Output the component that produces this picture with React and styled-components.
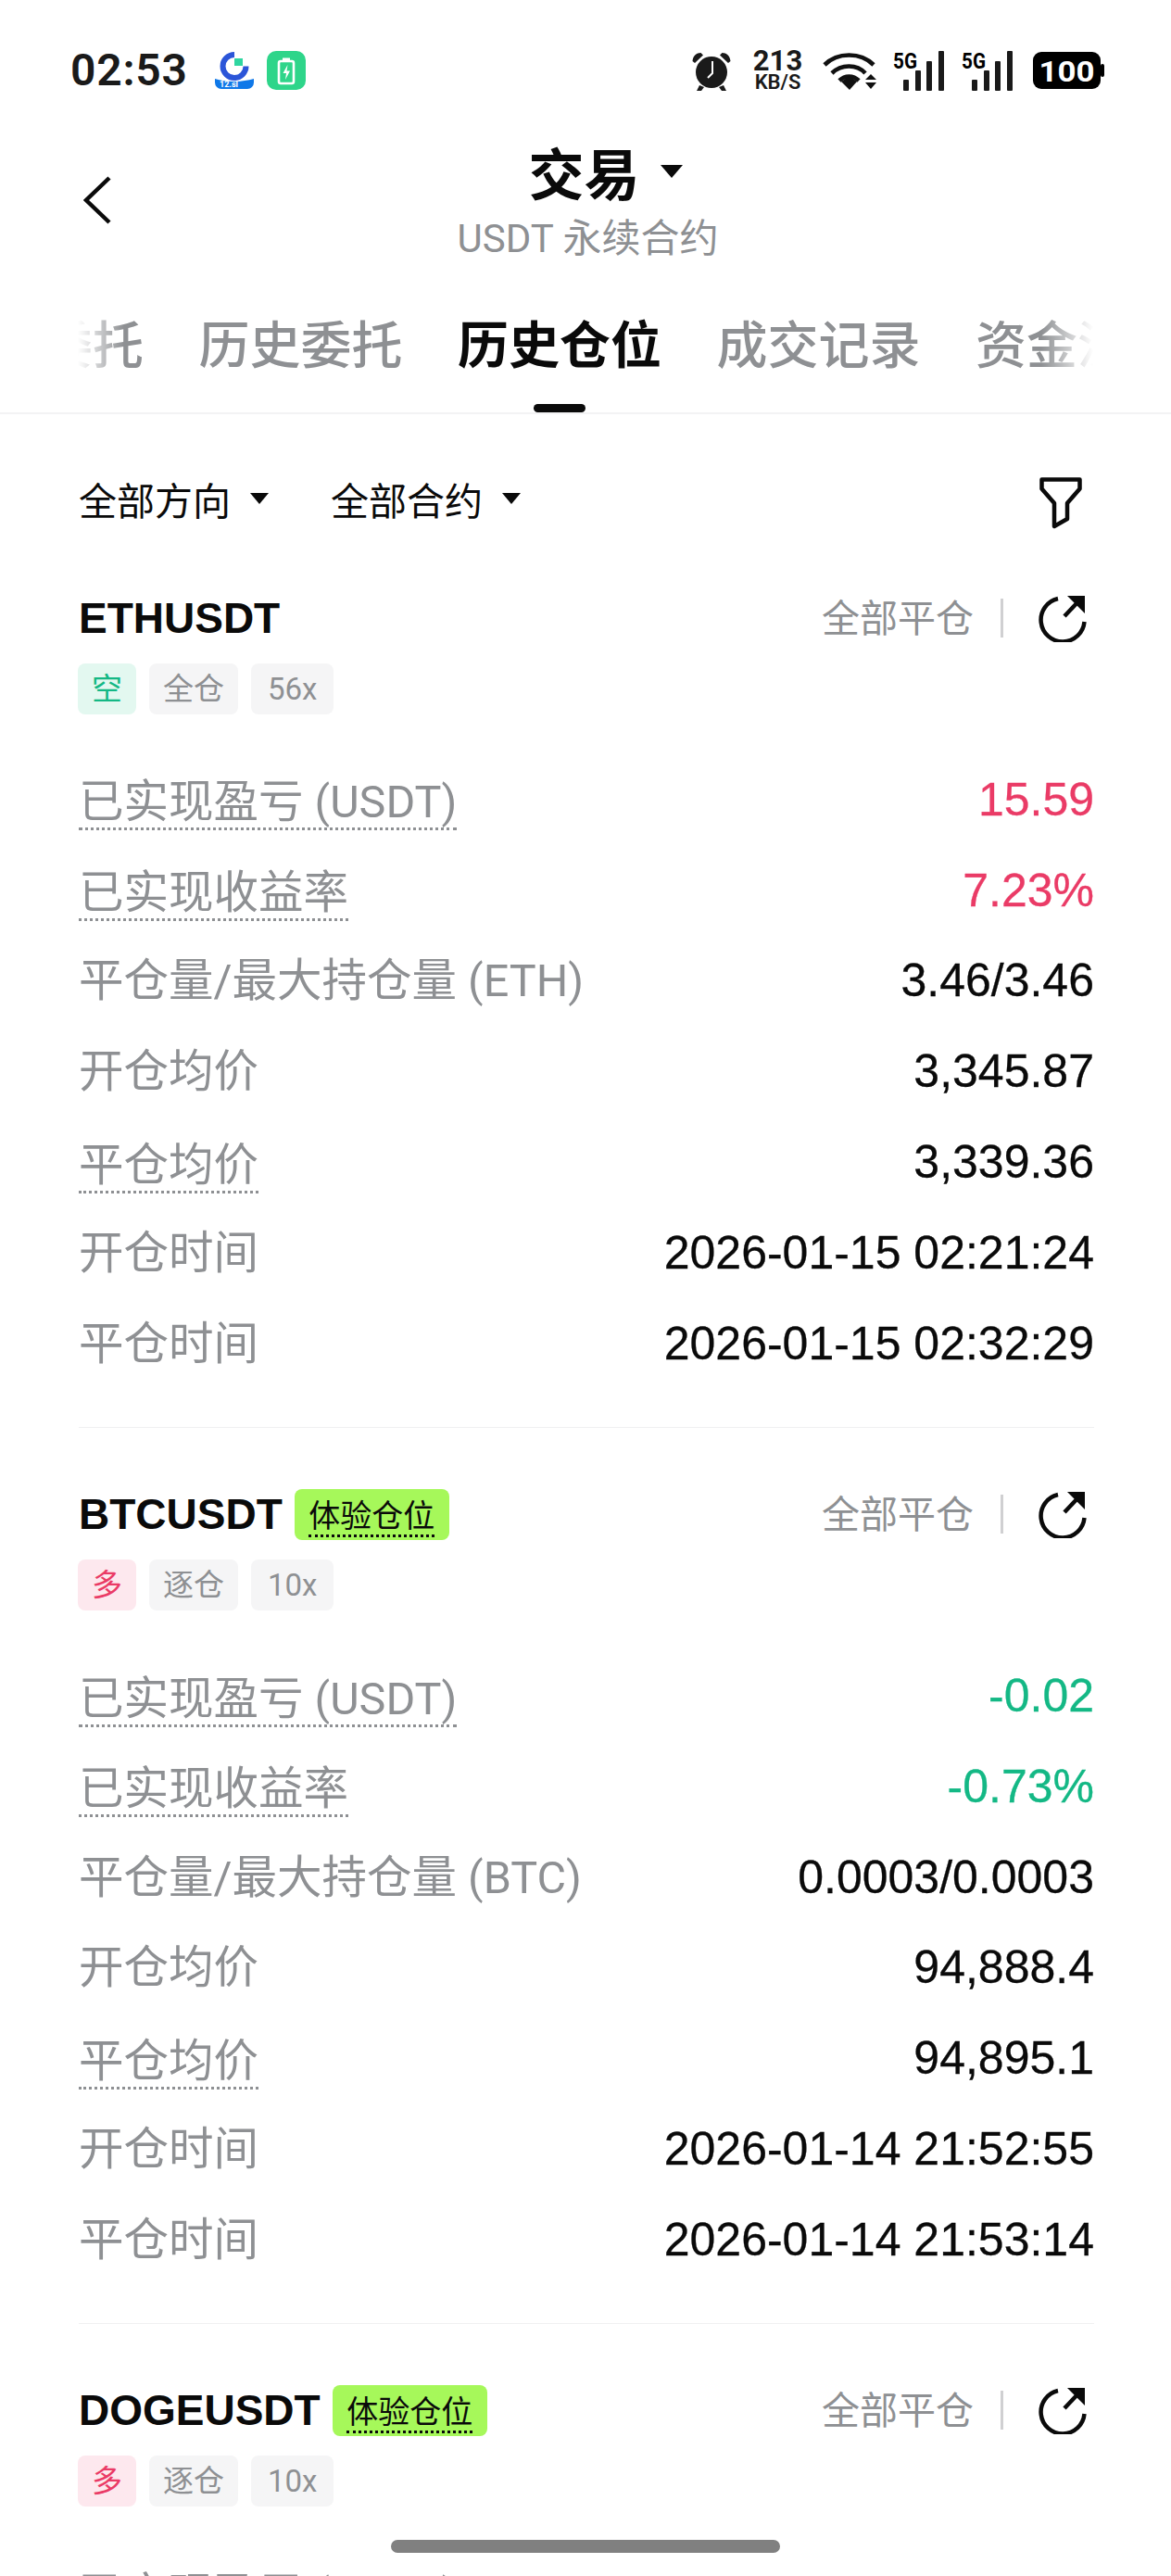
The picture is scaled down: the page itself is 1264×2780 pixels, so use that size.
import React from 'react';
import styled, { createGlobalStyle } from 'styled-components';

const CJK = `'Noto Sans CJK SC', sans-serif`;
const SANS = `Roboto, 'Noto Sans CJK SC', sans-serif`;
const GREY = '#8e9093';
const INK = '#0a0a0a';
const RED = '#ea3b66';
const GREEN = '#14b885';

const GlobalStyle = createGlobalStyle`
  html, body { margin: 0; padding: 0; background: #ffffff; }
`;

const Page = styled.div`
  position: relative;
  width: 1264px;
  height: 2780px;
  overflow: hidden;
  background: #ffffff;
  font-family: ${SANS};
  color: ${INK};
`;

const StatusBar = styled.div`
  display: flex;
  align-items: center;
  height: 44px;
  padding: 54px 72px 0 76px;
`;

const Clock = styled.span`
  font-size: 48px;
  font-weight: 600;
  letter-spacing: 0.8px;
  line-height: 44px;
  color: #1a1a1a;
  margin-right: 29px;
`;

const StatusIcons = styled.div`
  display: flex;
  align-items: center;
  gap: 14px;
`;

const StatusRight = styled.div`
  display: flex;
  align-items: center;
  margin-left: auto;
  gap: 19px;
`;

const Speed = styled.div`
  display: flex;
  flex-direction: column;
  align-items: center;
  width: 51px;
  margin: 0 4px 0 5px;
  font-weight: 700;
  color: #1a1a1a;
  line-height: 1;
`;

const SpeedValue = styled.span`
  font-size: 31px;
  line-height: 26px;
`;

const SpeedUnit = styled.span`
  font-size: 22px;
  line-height: 20px;
  font-weight: 600;
  white-space: nowrap;
`;

const BatterySlot = styled.div`
  display: flex;
  margin-left: 3px;
`;

const WifiSvg = styled.svg`
  margin-right: -2px;
`;

const Nav = styled.div`
  display: grid;
  grid-template-columns: 1fr auto 1fr;
  padding: 50px 85px 0 90px;
  height: 138px;
`;

const BackButton = styled.div`
  padding-top: 42px;
`;

const TitleBlock = styled.div`
  display: flex;
  flex-direction: column;
  align-items: center;
`;

const TitleRow = styled.div`
  display: flex;
  align-items: center;
  position: relative;
  left: 19px;
  gap: 22px;
  height: 74px;
`;

const Title = styled.span`
  font-family: ${CJK};
  font-size: 60px;
  font-weight: 700;
  line-height: 74px;
`;

const Caret = styled.span`
  display: inline-block;
  width: 0;
  height: 0;
  border-left: ${p => p.$size}px solid transparent;
  border-right: ${p => p.$size}px solid transparent;
  border-top: ${p => p.$size * 1.2}px solid #0a0a0a;
`;

const Subtitle = styled.span`
  font-size: 42px;
  line-height: 50px;
  color: ${GREY};
  margin-top: 11px;
`;

const TabBar = styled.div`
  height: 161px;
  border-bottom: 2px solid #f3f3f4;
  box-sizing: border-box;
  padding: 0 84px;
`;

const TabMask = styled.div`
  height: 100%;
  overflow: hidden;
  mask-image: linear-gradient(90deg, transparent 0, #000 50px, #000 1040px, transparent 1096px);
`;

const TabStrip = styled.div`
  display: flex;
  gap: 59.5px;
  margin-left: -149px;
  width: 1600px;
  height: 100%;
`;

const Tab = styled.div`
  position: relative;
  flex: none;
  font-family: ${CJK};
  font-size: 55px;
  line-height: 60px;
  padding-top: 52px;
  font-weight: ${p => (p.$active ? 700 : 500)};
  color: ${p => (p.$active ? INK : GREY)};
`;

const TabLine = styled.span`
  position: absolute;
  left: 50%;
  bottom: 0;
  width: 56px;
  height: 9px;
  margin-left: -28px;
  border-radius: 5px;
  background: ${INK};
`;

const FilterBar = styled.div`
  display: flex;
  align-items: center;
  height: 50px;
  padding: 66px 85px 11px;
`;

const FilterItem = styled.div`
  display: flex;
  align-items: center;
  gap: 21px;
  margin-right: 67px;
  font-family: ${CJK};
  font-size: 41px;
  line-height: 50px;
`;

const FilterIcon = styled.div`
  margin-left: auto;
  margin-right: 11px;
  display: flex;
  position: relative;
  top: 5px;
`;

const Card = styled.section`
  margin: 0 83px 0 85px;
  padding: 65px 0 41.6px;
  border-bottom: 1px solid #f0f0f1;
`;

const CardHead = styled.div`
  display: flex;
  align-items: center;
  height: 56px;
`;

const Symbol = styled.span`
  font-family: 'Liberation Sans', sans-serif;
  font-weight: 700;
  font-size: 46px;
  margin-right: 13px;
`;

const Trial = styled.span`
  display: inline-flex;
  justify-content: center;
  align-items: flex-start;
  width: 167px;
  height: 55px;
  border-radius: 8px;
  background: #a6f85a;
  font-family: ${CJK};
  font-size: 34px;
`;

const TrialText = styled.span`
  line-height: 44px;
  margin-top: 5px;
  border-bottom: 3px dotted #0a0a0a;
`;

const CloseAll = styled.div`
  display: flex;
  align-items: center;
  margin-left: auto;
  margin-right: 8px;
  font-family: ${CJK};
  font-size: 41px;
  color: ${GREY};
`;

const CloseText = styled.span`
  padding-bottom: 6px;
`;

const Separator = styled.span`
  width: 3px;
  height: 42px;
  background: #d0d0d2;
  margin: 0 38px 0 29px;
`;

const Tags = styled.div`
  display: flex;
  gap: 14px;
  margin-top: 21px;
  margin-left: -1px;
`;

const Tag = styled.span`
  height: 55px;
  padding: 0 ${p => p.$pad}px;
  border-radius: 8px;
  font-size: 33px;
  line-height: 55px;
  background: ${p => p.$bg};
  color: ${p => p.$color};
`;

const Rows = styled.div`
  margin-top: 43px;
`;

const Row = styled.div`
  display: flex;
  justify-content: space-between;
  align-items: center;
  height: 97.8px;
`;

const Label = styled.span`
  font-size: 48.5px;
  line-height: 54px;
  color: ${GREY};
  margin-top: ${p => (p.$dotted ? 10 : 2)}px;
  ${p => p.$dotted && `border-bottom: 3px dotted ${GREY};`}
`;

const Value = styled.span`
  font-family: 'Liberation Sans', sans-serif;
  font-size: 50px;
  -webkit-text-stroke: 0.3px currentColor;
  color: ${p => p.$color || INK};
`;

const HomeBar = styled.div`
  position: absolute;
  left: 422px;
  top: 2741px;
  width: 420px;
  height: 14px;
  border-radius: 7px;
  background: #808080;
`;

const GlyphText = styled.text`
  font-family: Roboto, sans-serif;
  font-weight: 700;
`;

const AppLogo = () => (
  <svg width="42" height="40" viewBox="0 0 42 40">
    <path d="M21 3a12.5 12.5 0 1 0 12.5 12.5" fill="none" stroke="#2b55d8" strokeWidth="6" />
    <rect x="21" y="7" width="9" height="8" fill="#2fd6a0" />
    <path d="M0 29c12 4 28 4 42 0v4a7 7 0 0 1-7 7H7a7 7 0 0 1-7-7z" fill="#0f78e8" />
    <text x="5" y="38" fontSize="9" fontFamily="Roboto, sans-serif" fontWeight="700" fill="#fff">12.sl</text>
  </svg>
);

const ChargeBadge = () => (
  <svg width="42" height="42" viewBox="0 0 42 42">
    <rect width="42" height="42" rx="10" fill="#2ed58a" />
    <rect x="13" y="11" width="16" height="24" rx="2" fill="none" stroke="#fff" strokeWidth="2.6" />
    <rect x="17" y="7.5" width="8" height="3.5" fill="#fff" />
    <path d="M22.5 15l-5 9h3.5l-1 7 5-9.5h-3.5z" fill="#fff" />
  </svg>
);

const AlarmIcon = () => (
  <svg width="44" height="44" viewBox="0 0 44 44">
    <circle cx="22" cy="24" r="17" fill="#1a1a1a" />
    <path d="M1.5 12C2 6 6 3 10.5 3L13 5.5 4 14z M42.500 12C42 6 38 3 33.500 3L31 5.500 40 14z" fill="#1a1a1a" />
    <path d="M9 38l-3 6h5l3-4z M35 38l3 6h-5l-3-4z" fill="#1a1a1a" />
    <path d="M23 12v13l-5 5" fill="none" stroke="#fff" strokeWidth="2" />
  </svg>
);

const WifiIcon = () => (
  <WifiSvg width="59" height="42" viewBox="0 0 59 42">
    <g fill="none" stroke="#111" strokeWidth="4.600">
      <path d="M2 15C16 1 41 1 55 15" />
      <path d="M10 24C20 14 37 14 46 24" />
      <path d="M18 32C24 26 33 26 39 32" />
    </g>
    <path d="M20 33l9-6 8 6-8 9z" fill="#111" />
    <path d="M46 31l6-6 6 6z M46 34l6 7 6-7z" fill="#111" />
  </WifiSvg>
);

const SignalIcon = () => (
  <svg width="55" height="44" viewBox="0 0 55 44">
    <GlyphText x="0" y="20" fontSize="24" textLength="26" lengthAdjust="spacingAndGlyphs">5G</GlyphText>
    <rect x="11" y="32" width="6" height="12" rx="1" fill="#1a1a1a" />
    <rect x="24" y="22" width="6" height="22" rx="1" fill="#1a1a1a" />
    <rect x="36" y="12" width="6" height="32" rx="1" fill="#1a1a1a" />
    <rect x="49" y="1" width="6" height="43" rx="1" fill="#1a1a1a" />
  </svg>
);

const BatteryIcon = () => (
  <svg width="77" height="40" viewBox="0 0 77 40">
    <rect x="0" y="0" width="73" height="40" rx="9" fill="#000" />
    <rect x="73" y="13" width="4" height="14" rx="2" fill="#000" />
    <GlyphText x="36.500" y="32" fontSize="32" textAnchor="middle" fill="#fff" textLength="60" lengthAdjust="spacingAndGlyphs">100</GlyphText>
  </svg>
);

const BackIcon = () => (
  <svg width="30" height="52" viewBox="0 0 30 52">
    <path d="M28 2L3 26l25 24" fill="none" stroke="#0a0a0a" strokeWidth="4.500" />
  </svg>
);

const FunnelIcon = () => (
  <svg width="46" height="56" viewBox="0 0 46 56">
    <path d="M2.500 2.500h41v10L30 28v17l-14 8V28L2.500 12.500z" fill="none" stroke="#0a0a0a" strokeWidth="4.500" strokeLinejoin="round" />
  </svg>
);

const ShareIcon = () => (
  <svg width="52" height="52" viewBox="0 0 52 52">
    <path d="M49.500 30A23.500 23.500 0 1 1 21 5" fill="none" stroke="#0a0a0a" strokeWidth="4.500" />
    <path d="M28 24L45 6" fill="none" stroke="#0a0a0a" strokeWidth="4.500" />
    <path d="M31 2h19v19z" fill="#0a0a0a" />
  </svg>
);

const SIDE = {
  short: { text: '空', bg: '#e3f8f0', color: GREEN },
  long: { text: '多', bg: '#fde8ee', color: RED },
};

const CARDS = [
  {
    symbol: 'ETHUSDT',
    side: 'short',
    margin: '全仓',
    leverage: '56x',
    pnl: '15.59',
    rate: '7.23%',
    pnlColor: RED,
    unit: 'ETH',
    size: '3.46/3.46',
    open: '3,345.87',
    close: '3,339.36',
    openAt: '2026-01-15 02:21:24',
    closeAt: '2026-01-15 02:32:29',
  },
  {
    symbol: 'BTCUSDT',
    trial: true,
    side: 'long',
    margin: '逐仓',
    leverage: '10x',
    pnl: '-0.02',
    rate: '-0.73%',
    pnlColor: GREEN,
    unit: 'BTC',
    size: '0.0003/0.0003',
    open: '94,888.4',
    close: '94,895.1',
    openAt: '2026-01-14 21:52:55',
    closeAt: '2026-01-14 21:53:14',
  },
];

const PositionHead = ({ symbol, trial, side, margin, leverage }) => (
  <>
    <CardHead>
      <Symbol>{symbol}</Symbol>
      {trial && (
        <Trial>
          <TrialText>体验仓位</TrialText>
        </Trial>
      )}
      <CloseAll>
        <CloseText>全部平仓</CloseText>
        <Separator />
        <ShareIcon />
      </CloseAll>
    </CardHead>
    <Tags>
      <Tag $pad={15} $bg={SIDE[side].bg} $color={SIDE[side].color}>{SIDE[side].text}</Tag>
      <Tag $pad={15} $bg="#f5f5f6" $color={GREY}>{margin}</Tag>
      <Tag $pad={18} $bg="#f5f5f6" $color={GREY}>{leverage}</Tag>
    </Tags>
  </>
);

const PositionCard = ({ data }) => (
  <Card>
    <PositionHead {...data} />
    <Rows>
      <Row>
        <Label $dotted>已实现盈亏 (USDT)</Label>
        <Value $color={data.pnlColor}>{data.pnl}</Value>
      </Row>
      <Row>
        <Label $dotted>已实现收益率</Label>
        <Value $color={data.pnlColor}>{data.rate}</Value>
      </Row>
      <Row>
        <Label>平仓量/最大持仓量 ({data.unit})</Label>
        <Value>{data.size}</Value>
      </Row>
      <Row>
        <Label>开仓均价</Label>
        <Value>{data.open}</Value>
      </Row>
      <Row>
        <Label $dotted>平仓均价</Label>
        <Value>{data.close}</Value>
      </Row>
      <Row>
        <Label>开仓时间</Label>
        <Value>{data.openAt}</Value>
      </Row>
      <Row>
        <Label>平仓时间</Label>
        <Value>{data.closeAt}</Value>
      </Row>
    </Rows>
  </Card>
);

export default function App() {
  return (
    <Page>
      <GlobalStyle />
      <StatusBar>
        <Clock>02:53</Clock>
        <StatusIcons>
          <AppLogo />
          <ChargeBadge />
        </StatusIcons>
        <StatusRight>
          <AlarmIcon />
          <Speed>
            <SpeedValue>213</SpeedValue>
            <SpeedUnit>KB/S</SpeedUnit>
          </Speed>
          <WifiIcon />
          <SignalIcon />
          <SignalIcon />
          <BatterySlot>
            <BatteryIcon />
          </BatterySlot>
        </StatusRight>
      </StatusBar>
      <Nav>
        <BackButton>
          <BackIcon />
        </BackButton>
        <TitleBlock>
          <TitleRow>
            <Title>交易</Title>
            <Caret $size={12} />
          </TitleRow>
          <Subtitle>USDT 永续合约</Subtitle>
        </TitleBlock>
      </Nav>
      <TabBar>
        <TabMask>
          <TabStrip>
            <Tab>当前委托</Tab>
            <Tab>历史委托</Tab>
            <Tab $active>
              历史仓位
              <TabLine />
            </Tab>
            <Tab>成交记录</Tab>
            <Tab>资金流水</Tab>
          </TabStrip>
        </TabMask>
      </TabBar>
      <FilterBar>
        <FilterItem>
          全部方向
          <Caret $size={10} />
        </FilterItem>
        <FilterItem>
          全部合约
          <Caret $size={10} />
        </FilterItem>
        <FilterIcon>
          <FunnelIcon />
        </FilterIcon>
      </FilterBar>
      {CARDS.map(card => (
        <PositionCard key={card.symbol} data={card} />
      ))}
      <Card>
        <PositionHead symbol="DOGEUSDT" trial side="long" margin="逐仓" leverage="10x" />
        <Rows>
          <Row>
            <Label $dotted>已实现盈亏 (USDT)</Label>
          </Row>
        </Rows>
      </Card>
      <HomeBar />
    </Page>
  );
}
